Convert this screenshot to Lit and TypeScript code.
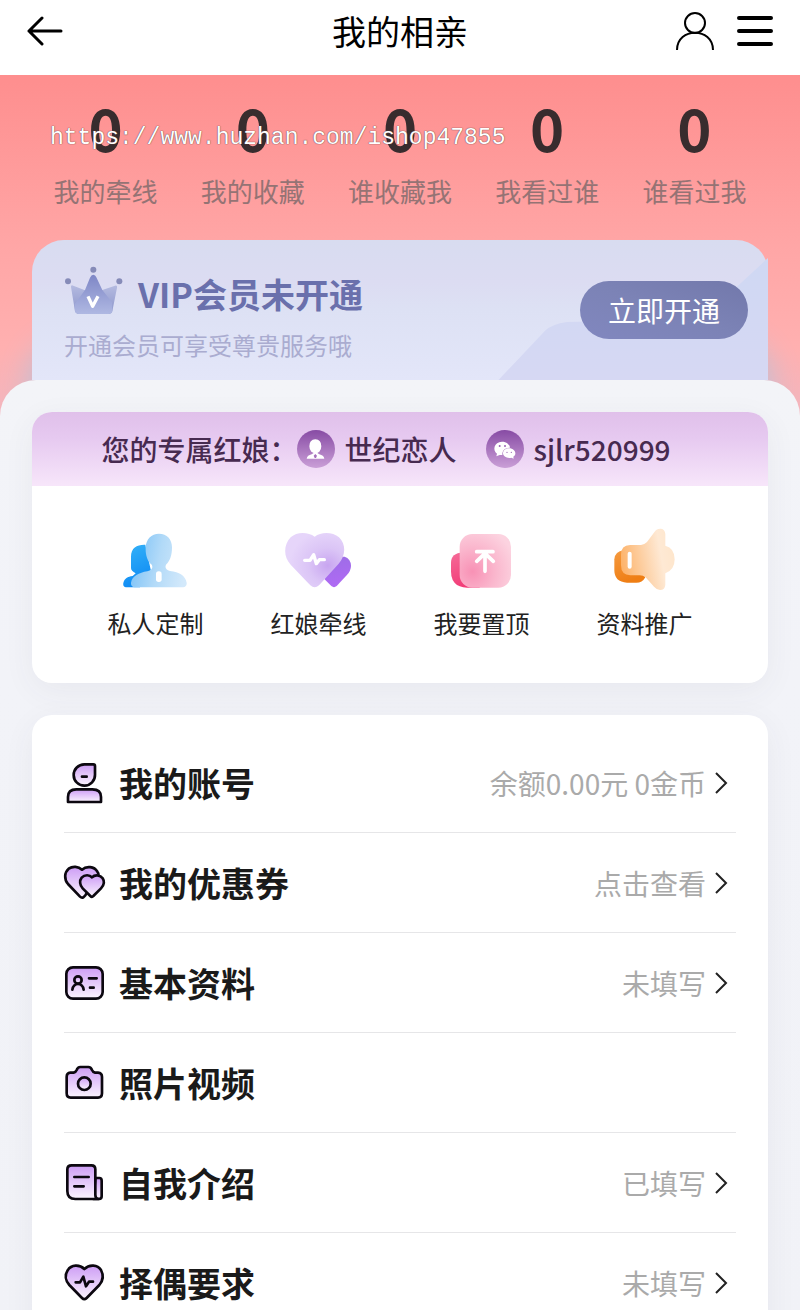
import { LitElement, css, html, svg, nothing } from 'lit'
import { customElement, property } from 'lit/decorators.js'

const stats = [
    { label: '我的牵线', count: 0 },
    { label: '我的收藏', count: 0 },
    { label: '谁收藏我', count: 0 },
    { label: '我看过谁', count: 0 },
    { label: '谁看过我', count: 0 },
]

const features = [
    { icon: 'custom', label: '私人定制' },
    { icon: 'match', label: '红娘牵线' },
    { icon: 'top', label: '我要置顶' },
    { icon: 'promote', label: '资料推广' },
]

const rows = [
    { icon: 'account', label: '我的账号', value: '余额0.00元 0金币' },
    { icon: 'coupon', label: '我的优惠券', value: '点击查看' },
    { icon: 'profile', label: '基本资料', value: '未填写' },
    { icon: 'photo', label: '照片视频', value: '' },
    { icon: 'intro', label: '自我介绍', value: '已填写' },
    { icon: 'require', label: '择偶要求', value: '未填写' },
]

const featureIcons: Record<string, any> = {
    custom: {
        box: '99 54 198 198',
        art: svg`
        <defs>
            <linearGradient id="a1" x1="0" y1="0" x2="0.3" y2="1"><stop offset="0" stop-color="#35b3f8"/><stop offset="1" stop-color="#108cf4"/></linearGradient>
            <linearGradient id="a2" x1="0" y1="0.4" x2="1" y2="0.6"><stop offset="0" stop-color="#7cc2f7"/><stop offset="0.5" stop-color="#b2daf8"/><stop offset="1" stop-color="#d3e9fb"/></linearGradient>
        </defs>
        <path fill="url(#a1)" d="M123 140C123 112 142 103 166 104L184 188L150 232H108Q98 230 100 219C103 205 113 200 128 198L137 190Q123 183 123 174Z"/>
        <path fill="url(#a2)" d="M207 71C231 71 246 88 246 112C246 136 240 153 229 163C224 170 226 180 240 183C268 187 286 196 290 218Q291 231 279 232H134Q122 231 123 218C126 198 147 188 172 184C188 181 190 171 184 163C172 153 166 134 167 112C168 88 184 71 207 71Z"/>
        <rect x="198" y="184" width="17" height="32" rx="8" fill="#fff"/>`,
    },
    match: {
        box: '588 54 198 198',
        art: svg`
        <defs>
            <linearGradient id="b1" x1="0.3" y1="0" x2="0.5" y2="1"><stop offset="0" stop-color="#9c6de6"/><stop offset="1" stop-color="#b06af4"/></linearGradient>
            <radialGradient id="b2" cx="0.72" cy="0.6" r="0.65"><stop offset="0" stop-color="#c8a5f0"/><stop offset="0.5" stop-color="#dbc5f6"/><stop offset="1" stop-color="#e6d5fa"/></radialGradient>
        </defs>
        <path fill="url(#b1)" d="M745 140H764Q782 146 783 167Q783 182 770 196L740 228Q732 235 724 228L694 198Z"/>
        <path fill="url(#b2)" d="M674 80C694 64 729 66 747 82C769 104 767 136 746 161L687 226Q674 238 661 226L602 164C580 141 580 105 602 82C621 64 655 66 674 80Z"/>
        <path fill="none" stroke="#fff" stroke-width="10" stroke-linecap="round" stroke-linejoin="round" d="M644 151H660L671 134L679 161L688 149H703"/>`,
    },
    top: {
        box: '118 54 198 198',
        art: svg`
        <defs>
            <linearGradient id="c1" x1="0" y1="0" x2="0.3" y2="1"><stop offset="0" stop-color="#f56b98"/><stop offset="1" stop-color="#f23d78"/></linearGradient>
            <radialGradient id="c2" cx="0.25" cy="0.7" r="0.85"><stop offset="0" stop-color="#f891b5"/><stop offset="0.5" stop-color="#fab5cc"/><stop offset="1" stop-color="#fcd3e0"/></radialGradient>
        </defs>
        <path fill="url(#c1)" d="M160 127H210V233H172Q124 231 124 184V158Q124 130 160 127Z"/>
        <rect x="150" y="72" width="154" height="161" rx="38" fill="url(#c2)"/>
        <path fill="none" stroke="#fff" stroke-width="11" stroke-linecap="round" stroke-linejoin="round" d="M201 125H250M226 184V132M201 154L226 130L251 154"/>`,
    },
    promote: {
        box: '607 54 198 198',
        art: svg`
        <defs>
            <linearGradient id="d1" x1="0" y1="0" x2="0.4" y2="1"><stop offset="0" stop-color="#f59a3f"/><stop offset="1" stop-color="#ef7e14"/></linearGradient>
            <linearGradient id="d2" x1="0" y1="0.6" x2="1" y2="0.4"><stop offset="0" stop-color="#fdb268"/><stop offset="0.45" stop-color="#fdd3aa"/><stop offset="0.75" stop-color="#fee9d4"/><stop offset="1" stop-color="#fee6cc"/></linearGradient>
        </defs>
        <path fill="url(#d1)" d="M642 121H706V203Q698 218 680 218H652Q614 216 614 180V148Q616 124 642 121Z"/>
        <path fill="url(#d2)" d="M661 105H694Q704 104 712 96L735 65Q741 55 754 56Q766 58 767 72V107Q795 114 795 148Q795 180 767 190V224Q766 240 751 240Q742 240 733 230L709 203Q700 196 690 196H662Q634 195 634 166V134Q634 106 661 105Z"/>
        <path stroke="#fff" stroke-width="12" stroke-linecap="round" d="M660 131V170"/>`,
    },
}

const rowIcons: Record<string, any> = {
    account: {
        box: '102 66 120 120',
        art: svg`
        <path d="M163 70H190Q195 70 195 76V101A32 32 0 1 1 163 70Z"/>
        <path d="M114 183V168Q114 145 139 145H187Q213 145 213 168V183Z"/>
        <path d="M156 107H170"/>`,
    },
    coupon: {
        box: '102 369 120 120',
        art: svg`
        <path d="M156 389C169 377 193 379 202 395Q207 401 206 409L166 466L160 472Q155 475 150 470L114 432C102 418 103 397 116 386C128 378 145 379 156 389Z"/>
        <path d="M186 412C195 403 211 405 218 415C225 426 221 437 213 445L190 468Q186 473 181 468L158 445C149 436 148 422 155 413C164 403 179 404 186 412Z"/>`,
    },
    profile: {
        box: '102 671 120 120',
        art: svg`
        <rect x="109" y="684" width="109" height="94" rx="20"/>
        <circle cx="144" cy="722" r="11"/>
        <path d="M127 751Q130 734 144 734Q158 734 161 751" fill="none"/>
        <path d="M177 717H200M180 745H191"/>`,
    },
    photo: {
        box: '102 98 120 120',
        art: svg`
        <path d="M121 127H131Q137 126 140 119Q143 110 151 110H175Q183 110 186 119Q189 126 195 127H204Q216 128 216 140V189Q216 202 204 202H122Q110 202 110 189V140Q110 128 121 127Z"/>
        <circle cx="163" cy="160" r="19"/>`,
    },
    intro: {
        box: '102 402 120 120',
        art: svg`
        <path d="M196 447H208Q215 447 215 455V502Q215 510 207 510H190Z"/>
        <path d="M125 409H184Q196 409 196 421V498Q196 510 206 510H136Q112 510 112 486V421Q112 409 125 409Z"/>
        <path d="M133 444H176M133 472H161"/>`,
    },
    require: {
        box: '102 703 120 120',
        art: svg`
        <path d="M163 721C178 706 203 708 213 724C222 741 219 756 208 769L170 808Q163 815 156 808L118 769C106 756 104 739 113 725C124 707 149 707 163 721Z"/>
        <path d="M137 761H150L160 744L168 773L177 759H189" fill="none"/>`,
    },
}

@customElement('my-stats')
export class MyStats extends LitElement {
    render() {
        return html`
        <ul class="stats">
            ${stats.map(s => html`
            <li>
                <a href="#">
                    <span class="count">${s.count}</span>
                    <span class="label">${s.label}</span>
                </a>
            </li>`)}
        </ul>
        <span class="mark">https://www.huzhan.com/ishop47855</span>`
    }

    static styles = css`
    :host {
        display: block;
        position: relative;
    }
    .stats {
        list-style: none;
        margin: 0;
        padding: 0;
        display: grid;
        grid-template-columns: repeat(5, 1fr);
    }
    a {
        display: flex;
        flex-direction: column;
        align-items: center;
        text-decoration: none;
    }
    .count {
        font-size: 58px;
        line-height: 60px;
        font-weight: 700;
        color: #382c2e;
    }
    .label {
        margin-top: 14px;
        font-size: 26px;
        line-height: 40px;
        color: #957374;
    }
    /* shop address printed across the counters */
    .mark {
        position: absolute;
        left: 18px;
        top: 25px;
        font-family: "Liberation Mono", monospace;
        font-size: 23px;
        line-height: 32px;
        color: #fff;
        text-shadow: 0 0 1px #6d4a4c, 0 0 1px #6d4a4c;
        pointer-events: none;
    }
    `
}

@customElement('vip-card')
export class VipCard extends LitElement {
    render() {
        return html`
        <svg class="fold" viewBox="293 82 811 368" aria-hidden="true">
            <defs>
                <linearGradient id="fold" x1="0" y1="0" x2="0" y2="1">
                    <stop offset="0" stop-color="#cfd8f3"/><stop offset="1" stop-color="#d6d8f3"/>
                </linearGradient>
            </defs>
            <path fill="url(#fold)" d="M293 450L435 300Q455 280 500 274L780 268Q900 260 960 215L1104 82V450Z"/>
        </svg>
        <div class="info">
            <div class="head">
                <svg class="crown" viewBox="189 98 177 150" aria-hidden="true">
                    <defs>
                        <linearGradient id="crown" x1="0" y1="0" x2="0" y2="1">
                            <stop offset="0" stop-color="#7e86c6"/><stop offset="1" stop-color="#afb8e2"/>
                        </linearGradient>
                        <linearGradient id="side" x1="0" y1="0" x2="0" y2="1">
                            <stop offset="0" stop-color="#b4bae0"/><stop offset="1" stop-color="#8d96cb"/>
                        </linearGradient>
                    </defs>
                    <circle cx="277" cy="112" r="9" fill="#868bb8"/>
                    <circle cx="201" cy="147" r="9" fill="#868bb8"/>
                    <circle cx="355" cy="147" r="9" fill="#868bb8"/>
                    <path fill="url(#side)" d="M210 164Q209 157 217 160L250 173L304 173L342 160Q350 158 348 166L334 237Q332 245 325 245H232Q224 245 222 237Z"/>
                    <path fill="url(#crown)" d="M277 127Q283 127 286 135L304 173L333 210L334 237Q332 245 325 245H232Q224 245 222 237L221 216L252 173L267 136Q271 127 277 127Z"/>
                    <path fill="none" stroke="#fff" stroke-width="10" stroke-linejoin="round" d="M261 192L275 222L291 192"/>
                </svg>
                <h2>VIP会员未开通</h2>
            </div>
            <p>开通会员可享受尊贵服务哦</p>
        </div>
        <button type="button">立即开通</button>`
    }

    static styles = css`
    :host {
        position: relative;
        display: flex;
        justify-content: space-between;
        align-items: center;
        box-sizing: border-box;
        min-height: 140px;
        padding: 0 20px 0 32px;
        border-radius: 32px 32px 0 0;
        background: linear-gradient(#d8dcf0, #dcdcf2 30%, #dde1f4 50%, #e3e6f9);
        box-shadow: 0 104px 32px 0 #b4c3dc;
    }
    .fold {
        position: absolute;
        right: 0;
        bottom: 0;
        width: 270px;
    }
    .info {
        position: relative;
        padding-top: 8px;
    }
    .head {
        display: flex;
        align-items: center;
        gap: 15px;
    }
    .crown {
        width: 59px;
        height: 50px;
        margin-bottom: 8px;
    }
    h2 {
        margin: 0;
        font-size: 34px;
        line-height: 52px;
        font-weight: 700;
        color: #6a70ac;
    }
    p {
        margin: 4px 0 0;
        font-size: 24px;
        line-height: 36px;
        color: #aaacd0;
    }
    button {
        position: relative;
        height: 58px;
        padding: 0 28px;
        border: 0;
        border-radius: 29px;
        background: linear-gradient(to top right, #8187bf, #7c83b6 50%, #7278ab);
        color: #fff;
        font: inherit;
        font-size: 28px;
    }
    `
}

@customElement('maker-card')
export class MakerCard extends LitElement {
    render() {
        return html`
        <div class="band">
            <span>您的专属红娘：</span>
            <svg class="round" viewBox="0 0 114 114" aria-hidden="true">
                <defs>
                    <linearGradient id="round" x1="0" y1="0" x2="0" y2="1">
                        <stop offset="0" stop-color="#874ba4"/><stop offset="1" stop-color="#ca9fd7"/>
                    </linearGradient>
                </defs>
                <circle cx="57" cy="57" r="57" fill="url(#round)"/>
                <path fill="#fff" d="M55 28Q73 29 73 49Q73 59 67 65L61 69L67 73Q80 76 82 86H29Q31 76 44 73L50 69L43 65Q37 59 37 49Q37 29 55 28Z"/>
                <path fill="#a56fbc" d="M55 72L60 77L57 84H53L50 77Z"/>
            </svg>
            <span>世纪恋人</span>
            <svg class="round wechat" viewBox="0 0 114 114" aria-hidden="true">
                <circle cx="57" cy="57" r="57" fill="url(#round)"/>
                <path fill="#fff" d="M48 35C61 35 71 43 72 53C58 52 48 61 49 75H41L31 79L33 71C19 61 24 35 48 35Z"/>
                <path fill="#fff" d="M69 55C84 55 91 67 87 75Q85 79 82 80L83 86L76 83C63 86 51 79 51 70C51 61 59 55 69 55Z"/>
                <g fill="#9a62b4"><circle cx="41" cy="48" r="3"/><circle cx="57" cy="48" r="3"/><circle cx="63" cy="67" r="2"/><circle cx="76" cy="67" r="2"/></g>
            </svg>
            <span>sjlr520999</span>
        </div>
        <nav class="features">
            ${features.map(f => html`
            <a href="#">
                <svg class="pic" viewBox=${featureIcons[f.icon].box} aria-hidden="true">${featureIcons[f.icon].art}</svg>
                ${f.label}
            </a>`)}
        </nav>`
    }

    static styles = css`
    :host {
        display: block;
        border-radius: 20px;
        overflow: hidden;
        background: #fff;
        box-shadow: 0 8px 32px rgba(60, 60, 80, 0.06);
    }
    .band {
        display: flex;
        justify-content: center;
        align-items: center;
        height: 74px;
        padding-right: 28px;
        background: linear-gradient(#e0c0ea, #e6c9f0 35%, #f7e6fa);
        font-size: 28px;
        font-weight: 500;
        color: #472a50;
        white-space: nowrap;
    }
    .round {
        width: 38px;
        height: 38px;
        margin-right: 9px;
    }
    .wechat {
        margin-left: 30px;
    }
    .features {
        display: grid;
        grid-template-columns: repeat(4, 1fr);
        padding: 42px;
    }
    .features a {
        display: flex;
        flex-direction: column;
        align-items: center;
        gap: 10px;
        font-size: 24px;
        line-height: 37px;
        color: #222;
        text-decoration: none;
    }
    .pic {
        width: 66px;
        height: 66px;
        overflow: visible;
    }
    `
}

@customElement('list-row')
export class ListRow extends LitElement {
    @property() icon = ''
    @property() label = ''
    @property() value = ''

    render() {
        return html`
        <a href="#">
            <svg class="icon" viewBox=${rowIcons[this.icon].box} aria-hidden="true">
                <defs>
                    <linearGradient id="fill" x1="0" y1="0" x2="0" y2="1">
                        <stop offset="0" stop-color="#cd9df5"/><stop offset="1" stop-color="#fbf4fe"/>
                    </linearGradient>
                </defs>
                ${rowIcons[this.icon].art}
            </svg>
            <span class="label">${this.label}</span>
            ${this.value ? html`
            <span class="value">${this.value}</span>
            <svg class="arrow" viewBox="0 0 14 24" aria-hidden="true"><path d="M2 2L12 12L2 22"/></svg>` : nothing}
        </a>`
    }

    static styles = css`
    :host {
        display: block;
        border-bottom: 1px solid #e6e6e8;
    }
    a {
        display: flex;
        align-items: center;
        box-sizing: border-box;
        height: 99px;
        padding-right: 8px;
        text-decoration: none;
    }
    .icon {
        width: 40px;
        height: 40px;
        margin-right: 15px;
        overflow: visible;
        fill: url(#fill);
        stroke: #0c0810;
        stroke-width: 8px;
        stroke-linecap: round;
        stroke-linejoin: round;
    }
    .label {
        flex: 1;
        font-size: 34px;
        font-weight: 700;
        color: #1a1a1a;
    }
    .value {
        font-size: 28px;
        color: #aaa;
    }
    .arrow {
        width: 14px;
        height: 24px;
        margin-left: 8px;
        fill: none;
        stroke: #222;
        stroke-width: 2px;
    }
    `
}

@customElement('app-root')
export class AppRoot extends LitElement {
    render() {
        return html`
        <header>
            <button type="button" aria-label="返回">
                <svg width="36" height="30" viewBox="0 0 36 30"><path d="M15 2L2 15L15 28M2 15H34" stroke-width="3"/></svg>
            </button>
            <h1>我的相亲</h1>
            <div class="tools">
                <button type="button" aria-label="个人">
                    <svg width="38" height="38" viewBox="0 0 38 38"><g stroke-width="2"><circle cx="19" cy="11" r="10"/><path d="M1 38C1 15 37 15 37 38"/></g></svg>
                </button>
                <button type="button" aria-label="菜单">
                    <svg width="36" height="32" viewBox="0 0 36 32"><path d="M2 3H34M2 16H34M2 29H34" stroke-width="4"/></svg>
                </button>
            </div>
        </header>
        <main>
            <section class="hero">
                <my-stats></my-stats>
                <vip-card></vip-card>
            </section>
            <section class="sheet">
                <maker-card></maker-card>
                <div class="list">
                    ${rows.map(r => html`<list-row .icon=${r.icon} .label=${r.label} .value=${r.value}></list-row>`)}
                </div>
            </section>
        </main>`
    }

    static styles = css`
    :host {
        display: flex;
        flex-direction: column;
        box-sizing: border-box;
        height: 100vh;
        padding-bottom: 6px;
        background: #fff;
        font-family: "Noto Sans CJK SC", sans-serif;
    }
    header {
        display: grid;
        grid-template-columns: 1fr auto 1fr;
        align-items: center;
        flex: none;
        box-sizing: border-box;
        height: 75px;
        padding: 0 27px 14px;
    }
    header button {
        display: flex;
        padding: 0;
        border: 0;
        background: none;
    }
    header svg {
        fill: none;
        stroke: #000;
        stroke-linecap: round;
        stroke-linejoin: round;
    }
    h1 {
        margin: 0;
        font-size: 34px;
        line-height: 48px;
        font-weight: 400;
        color: #000;
    }
    .tools {
        display: flex;
        justify-content: flex-end;
        align-items: center;
        gap: 23px;
    }
    main {
        flex: 1;
        min-height: 0;
        overflow-y: auto;
        scrollbar-width: none;
        background: #f1f3f8;
    }
    .hero {
        padding: 22px 32px 36px;
        background: linear-gradient(#fe8e8e, #ffa6a6 50%, #ffb0b0 80%, #f3b6be);
    }
    vip-card {
        margin-top: 29px;
    }
    .sheet {
        position: relative;
        display: flex;
        flex-direction: column;
        gap: 32px;
        margin-top: -36px;
        padding: 32px 32px 0;
        border-radius: 36px 36px 0 0;
        background: linear-gradient(#f3f4f8, #f2f3f8 300px, #f1f2f7);
    }
    .list {
        padding: 18px 32px 0;
        border-radius: 20px 20px 0 0;
        background: #fff;
        box-shadow: 0 8px 32px rgba(60, 60, 80, 0.06);
    }
    `
}
